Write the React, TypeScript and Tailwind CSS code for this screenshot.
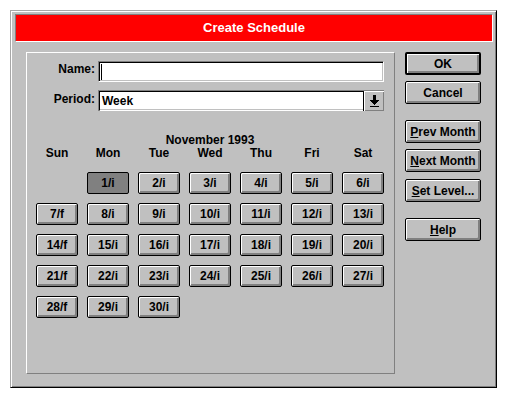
import React from "react";

const days: (string | null)[] = [
  null,
  ...Array.from({ length: 30 }, (_, i) => {
    const d = i + 1;
    return `${d}/${d % 7 === 0 ? "f" : "i"}`;
  }),
];

const weekDays = ["Sun", "Mon", "Tue", "Wed", "Thu", "Fri", "Sat"];

const SideButton: React.FC<{ className?: string; isDefault?: boolean; children: React.ReactNode }> = ({
  className = "",
  isDefault,
  children,
}) => (
  <div
    className={`flex h-[23px] w-[76px] items-center justify-center rounded-[2px] bg-[#c0c0c0] border-black shadow-[inset_1px_1px_0_#fff,inset_-2px_-2px_0_#808080] ${
      isDefault ? "border-2" : "border"
    } ${className}`}
  >
    {children}
  </div>
);

const DayButton: React.FC<{ label: string; selected?: boolean }> = ({ label, selected }) => (
  <div
    className={`flex h-[22px] w-[42px] items-center justify-center rounded-[2px] border border-black ${
      selected ? "bg-[#808080]" : "bg-[#c0c0c0] shadow-[inset_1px_1px_0_#fff,inset_-2px_-2px_0_#808080]"
    }`}
  >
    {label}
  </div>
);

const DropArrow = () => (
  <svg width="9" height="12" viewBox="0 0 9 12" shapeRendering="crispEdges">
    <rect x="3" y="0" width="3" height="5" fill="#000" />
    <rect x="0" y="5" width="9" height="1" fill="#000" />
    <rect x="1" y="6" width="7" height="1" fill="#000" />
    <rect x="2" y="7" width="5" height="1" fill="#000" />
    <rect x="3" y="8" width="3" height="1" fill="#000" />
    <rect x="4" y="9" width="1" height="1" fill="#000" />
    <rect x="0" y="11" width="9" height="1" fill="#000" />
  </svg>
);

export default function App() {
  return (
    <div className="min-h-screen bg-white pt-[10px] pl-[10px] font-['Liberation_Sans',Arial,sans-serif] text-[12px] font-bold leading-[14px] text-black">
      <div className="flex h-[378px] w-[487px] flex-col border border-t-[#a8a8a8] border-l-[#a8a8a8] border-r-black border-b-black bg-[#c0c0c0] shadow-[inset_1px_1px_0_#fff,inset_-1px_-1px_0_#808080]">
        {/* title bar */}
        <div className="ml-[4px] mt-[3px] flex h-[28px] w-[478px] items-center justify-center border border-t-[#808080] border-l-[#808080] border-r-white border-b-white bg-[#ff0000] text-[13px] text-white">
          Create Schedule
        </div>

        <div className="ml-[15px] mt-[10px] flex">
          {/* group box */}
          <div className="h-[322px] w-[369px] border border-t-white border-l-white border-r-[#808080] border-b-[#808080]">
            <div className="mt-[8px] flex items-center">
              <div className="-mt-[5px] w-[68px] text-right">Name:</div>
              <div className="ml-[3px] flex h-[21px] w-[286px] items-center border border-t-[#808080] border-l-[#808080] border-r-white border-b-white bg-white pl-[2px] shadow-[inset_1px_1px_0_#000,inset_-1px_-1px_0_#c0c0c0]">
                <div className="h-[16px] w-[1px] bg-black" />
              </div>
            </div>

            <div className="mt-[8px] flex items-center">
              <div className="-mt-[3px] w-[68px] text-right">Period:</div>
              <div className="ml-[3px] flex h-[21px] w-[286px] border-t border-l border-[#808080]">
                <div className="flex flex-1 items-center border-t border-l border-black border-b border-b-white bg-white pl-[2px] shadow-[inset_0_-1px_0_#c0c0c0]">
                  Week
                </div>
                <div className="flex h-[20px] w-[21px] items-center justify-center border-l border-black bg-[#c0c0c0] shadow-[inset_1px_1px_0_#fff,inset_-1px_-1px_0_#808080]">
                  <DropArrow />
                </div>
              </div>
            </div>

            <div className="ml-[9px] mt-[22px] w-[348px]">
              <div className="text-center leading-[14px]">November 1993</div>
              <div className="grid grid-cols-[repeat(7,42px)] gap-x-[9px] leading-[13px]">
                {weekDays.map((w) => (
                  <div key={w} className="text-center">
                    {w}
                  </div>
                ))}
              </div>
              <div className="mt-[12px] grid grid-cols-[repeat(7,42px)] gap-x-[9px] gap-y-[9px]">
                {days.map((d, i) =>
                  d ? <DayButton key={i} label={d} selected={d === "1/i"} /> : <div key={i} />
                )}
              </div>
            </div>
          </div>

          {/* buttons */}
          <div className="ml-[10px] flex flex-col">
            <SideButton isDefault>OK</SideButton>
            <SideButton className="mt-[6px]">Cancel</SideButton>
            <SideButton className="mt-[16px]">
              <span>
                <u className="underline-offset-[1px]">P</u>rev Month
              </span>
            </SideButton>
            <SideButton className="mt-[6px]">
              <span>
                <u className="underline-offset-[1px]">N</u>ext Month
              </span>
            </SideButton>
            <SideButton className="mt-[7px]">
              <span>
                <u className="underline-offset-[1px]">S</u>et Level...
              </span>
            </SideButton>
            <SideButton className="mt-[16px]">
              <span>
                <u className="underline-offset-[1px]">H</u>elp
              </span>
            </SideButton>
          </div>
        </div>
      </div>
    </div>
  );
}
